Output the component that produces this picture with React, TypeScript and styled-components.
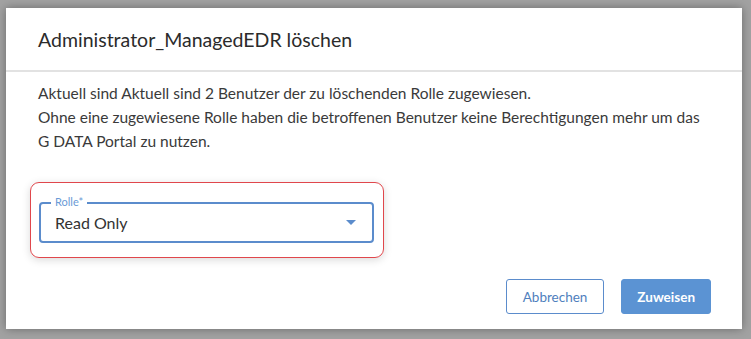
import React from 'react';
import styled, { createGlobalStyle } from 'styled-components';

const GlobalStyle = createGlobalStyle`
  html, body {
    margin: 0;
    padding: 0;
    background: #a2a2a2;
  }
  body {
    font-family: Lato, "Open Sans", sans-serif;
  }
`;

const Backdrop = styled.div`
  width: 751px;
  height: 339px;
  box-sizing: border-box;
  padding: 8px 9px 10px 6px;
  background: #a2a2a2;
  display: flex;
`;

const Dialog = styled.div`
  flex: 1;
  background: #fff;
  display: flex;
  flex-direction: column;
  box-shadow: 0 0 9px rgba(0, 0, 0, 0.35);
`;

const Header = styled.div`
  height: 62px;
  display: flex;
  align-items: center;
  padding: 0 32px;
  border-bottom: 2px solid #e2e2e2;
`;

const Title = styled.h2`
  margin: 0;
  font-size: 19.5px;
  font-weight: 400;
  color: #2b2b2b;
`;

const Body = styled.div`
  padding: 9px 32px 0;
  flex: 1;
  display: flex;
  flex-direction: column;
`;

const Text = styled.p`
  margin: 0;
  font-size: 15.5px;
  line-height: 24px;
  color: #3a3a3a;
`;

const FieldFrame = styled.div`
  margin: 29px 0 0 -8px;
  width: 354px;
  box-sizing: border-box;
  padding: 19px 9px 14px 8px;
  border: 1px solid #e0474c;
  border-radius: 9px;
  box-shadow: 0 2px 8px rgba(0, 0, 0, 0.15);
`;

const Select = styled.div`
  position: relative;
  height: 41px;
  box-sizing: border-box;
  border: 2px solid #5b8ccc;
  border-radius: 4px;
  display: flex;
  align-items: center;
  padding: 0 14px;
`;

const Legend = styled.span`
  position: absolute;
  top: -9px;
  left: 10px;
  padding: 0 4px;
  background: #fff;
  font-size: 11px;
  line-height: 14px;
  color: #6a9ad6;
`;

const Value = styled.span`
  flex: 1;
  font-size: 16px;
  color: #333;
`;

const Caret = styled.span`
  width: 0;
  height: 0;
  border-left: 5px solid transparent;
  border-right: 5px solid transparent;
  border-top: 5px solid #5b8ccc;
  margin-right: 2px;
`;

const Footer = styled.div`
  display: flex;
  justify-content: flex-end;
  gap: 17px;
  padding: 0 31px 15px;
`;

const Button = styled.button<{ $primary?: boolean }>`
  height: 35px;
  padding: 0 ${(p) => (p.$primary ? 15 : 16)}px;
  border-radius: 3px;
  font-family: Lato, "Open Sans", sans-serif;
  font-size: 13.5px;
  font-weight: ${(p) => (p.$primary ? 700 : 400)};
  border: 1px solid;
  background: ${(p) => (p.$primary ? '#5b93d3' : '#fff')};
  border-color: ${(p) => (p.$primary ? '#5b93d3' : '#5b8ccc')};
  color: ${(p) => (p.$primary ? '#fff' : '#4f80bd')};
  cursor: pointer;
`;

export default function App() {
  return (
    <>
      <GlobalStyle />
      <Backdrop>
        <Dialog>
          <Header>
            <Title>Administrator_ManagedEDR löschen</Title>
          </Header>
          <Body>
            <Text>Aktuell sind Aktuell sind 2 Benutzer der zu löschenden Rolle zugewiesen.</Text>
            <Text>
              Ohne eine zugewiesene Rolle haben die betroffenen Benutzer keine Berechtigungen mehr um das
              <br />
              G DATA Portal zu nutzen.
            </Text>
            <FieldFrame>
              <Select>
                <Legend>Rolle*</Legend>
                <Value>Read Only</Value>
                <Caret />
              </Select>
            </FieldFrame>
          </Body>
          <Footer>
            <Button>Abbrechen</Button>
            <Button $primary>Zuweisen</Button>
          </Footer>
        </Dialog>
      </Backdrop>
    </>
  );
}
